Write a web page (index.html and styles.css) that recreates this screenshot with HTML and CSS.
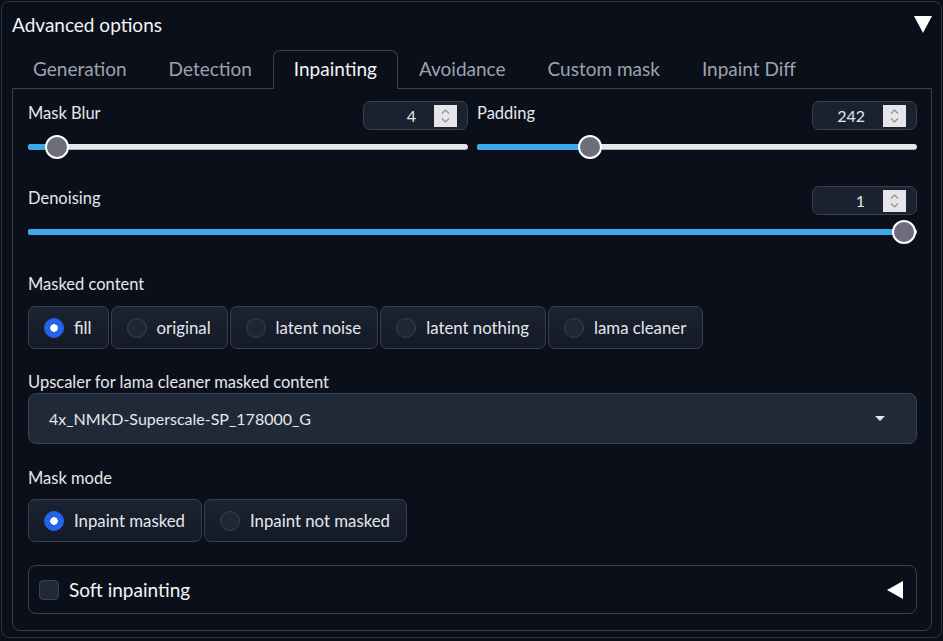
FILE: index.html
```html
<!DOCTYPE html>
<html>
<head>
<meta charset="utf-8">
<link rel="stylesheet" href="styles.css">
</head>
<body>
<div class="acc">
  <div class="acc-head">
    <span class="acc-title">Advanced options</span>
    <svg class="tri-down" width="18" height="17" viewBox="0 0 18 17"><polygon points="0,0 18,0 9,17" fill="#ffffff"/></svg>
  </div>
  <div class="tabs">
    <div class="tab">Generation</div>
    <div class="tab">Detection</div>
    <div class="tab tab-on">Inpainting</div>
    <div class="tab">Avoidance</div>
    <div class="tab">Custom mask</div>
    <div class="tab">Inpaint Diff</div>
  </div>
  <div class="panel">
    <div class="grid2">
      <div class="sl">
        <div class="sl-head">
          <span class="lbl">Mask Blur</span>
          <div class="num"><span class="num-val">4</span><svg class="spin" width="23" height="22" viewBox="0 0 23 22"><rect width="23" height="22" fill="#e6e6ea"/><polyline points="8,8.5 11.5,5 15,8.5" fill="none" stroke="#8d9097" stroke-width="1.2"/><polyline points="8,13.5 11.5,17 15,13.5" fill="none" stroke="#8d9097" stroke-width="1.2"/></svg></div>
        </div>
        <div class="range"><div class="track"><div class="fill" style="width:6.6%"></div></div><div class="thumb" style="left:6.6%"></div></div>
      </div>
      <div class="sl">
        <div class="sl-head">
          <span class="lbl">Padding</span>
          <div class="num"><span class="num-val">242</span><svg class="spin" width="23" height="22" viewBox="0 0 23 22"><rect width="23" height="22" fill="#e6e6ea"/><polyline points="8,8.5 11.5,5 15,8.5" fill="none" stroke="#8d9097" stroke-width="1.2"/><polyline points="8,13.5 11.5,17 15,13.5" fill="none" stroke="#8d9097" stroke-width="1.2"/></svg></div>
        </div>
        <div class="range"><div class="track"><div class="fill" style="width:25.7%"></div></div><div class="thumb" style="left:25.7%"></div></div>
      </div>
    </div>
    <div class="sl sl-denoise">
      <div class="sl-head">
        <span class="lbl">Denoising</span>
        <div class="num"><span class="num-val">1</span><svg class="spin" width="23" height="22" viewBox="0 0 23 22"><rect width="23" height="22" fill="#e6e6ea"/><polyline points="8,8.5 11.5,5 15,8.5" fill="none" stroke="#8d9097" stroke-width="1.2"/><polyline points="8,13.5 11.5,17 15,13.5" fill="none" stroke="#8d9097" stroke-width="1.2"/></svg></div>
      </div>
      <div class="range"><div class="track"><div class="fill" style="width:98.5%"></div></div><div class="thumb" style="left:98.5%"></div></div>
    </div>

    <div class="field f-masked">
      <div class="lbl-line">Masked content</div>
      <div class="radios">
        <div class="ritem"><span class="rdot on"></span><span>fill</span></div>
        <div class="ritem"><span class="rdot"></span><span>original</span></div>
        <div class="ritem"><span class="rdot"></span><span>latent noise</span></div>
        <div class="ritem"><span class="rdot"></span><span>latent nothing</span></div>
        <div class="ritem"><span class="rdot"></span><span>lama cleaner</span></div>
      </div>
    </div>

    <div class="field f-upscaler">
      <div class="lbl-line">Upscaler for lama cleaner masked content</div>
      <div class="dropdown">
        <span class="dd-val">4x_NMKD-Superscale-SP_178000_G</span>
        <svg class="dd-arrow" width="10" height="5" viewBox="0 0 10 5"><polygon points="0,0 10,0 5,5" fill="#e5e7eb"/></svg>
      </div>
    </div>

    <div class="field f-mode">
      <div class="lbl-line">Mask mode</div>
      <div class="radios">
        <div class="ritem"><span class="rdot on"></span><span>Inpaint masked</span></div>
        <div class="ritem"><span class="rdot"></span><span>Inpaint not masked</span></div>
      </div>
    </div>

    <div class="soft">
      <span class="cbox"></span>
      <span class="soft-title">Soft inpainting</span>
      <svg class="tri-left" width="16" height="18" viewBox="0 0 16 18"><polygon points="16,0 16,18 0,9" fill="#ffffff"/></svg>
    </div>
  </div>
</div>
</body>
</html>
```
FILE: styles.css
```css
* { box-sizing: border-box; }
html, body { margin: 0; padding: 0; background: #0b0f19; }
body {
  padding: 1px 0 0 1px;
  font-family: "Lato", "Liberation Sans", sans-serif;
  color: #e5e7eb;
}
.acc {
  width: 941px;
  border: 1px solid #2b3342;
  border-radius: 8px;
  padding: 0 9px 6px 10px;
  background: #0b0f19;
}
.acc-head {
  height: 48px;
  display: flex;
  align-items: center;
  justify-content: space-between;
}
.acc-title {
  font-size: 19px;
  color: #f3f4f6;
  margin-top: -3px;
}
.tri-down { display: block; margin-top: -4px; }
.tabs {
  display: flex;
  height: 38px;
  position: relative;
  z-index: 1;
}
.tab {
  height: 38px;
  padding: 0 20px 3px;
  display: flex;
  align-items: center;
  font-size: 19px;
  color: #9ca3af;
  border: 1px solid transparent;
  border-bottom: none;
}
.tab-on {
  color: #f3f4f6;
  border-color: #374151;
  border-radius: 7px 7px 0 0;
  background: #0b0f19;
  height: 39px;
  margin-bottom: -1px;
}
.panel {
  border: 1px solid #374151;
  border-radius: 0 0 8px 8px;
  padding: 12px 14px 16px 15px;
  display: flex;
  flex-direction: column;
}
.grid2 {
  display: grid;
  grid-template-columns: 1fr 1fr;
  column-gap: 9px;
}
.sl-head {
  display: flex;
  justify-content: space-between;
  align-items: flex-start;
  height: 29px;
}
.lbl {
  font-size: 16.5px;
  line-height: 24px;
  color: #e5e7eb;
}
.num {
  width: 105px;
  height: 29px;
  border: 1px solid #374151;
  border-radius: 7px;
  background: #1a2130;
  display: flex;
  align-items: center;
  justify-content: flex-end;
  padding: 0 10px 0 0;
}
.num-val {
  font-size: 16px;
  color: #e5e7eb;
  margin-right: 18px;
}
.spin { display: block; }
.range {
  position: relative;
  height: 24px;
  margin-top: 5px;
  display: flex;
  align-items: center;
}
.track {
  width: 100%;
  height: 6px;
  border-radius: 3px;
  background: #e5e7eb;
  overflow: hidden;
  box-shadow: inset 0 -1px 0 rgba(0,0,0,0.25);
}
.fill {
  height: 100%;
  background: #3aa9e8;
}
.thumb {
  position: absolute;
  top: 0;
  width: 24px;
  height: 24px;
  margin-left: -12px;
  border-radius: 50%;
  background: #6d6d7c;
  border: 2px solid #ffffff;
}
.sl-denoise { margin-top: 27px; }
.field { display: flex; flex-direction: column; }
.f-masked { margin-top: 29px; }
.f-upscaler { margin-top: 22px; }
.f-mode { margin-top: 23px; }
.lbl-line {
  font-size: 16.5px;
  line-height: 22px;
  color: #e5e7eb;
}
.radios {
  display: flex;
  gap: 2px;
  margin-top: 11px;
}
.f-mode .radios { margin-top: 10px; }
.ritem {
  height: 43px;
  display: flex;
  align-items: center;
  gap: 10px;
  padding: 0 16px 0 15px;
  border: 1px solid #374151;
  border-radius: 7px;
  background: linear-gradient(to bottom, #1b2231, #141a26);
  font-size: 16.8px;
  color: #e5e7eb;
}
.rdot {
  width: 20px;
  height: 20px;
  border-radius: 50%;
  background: #1f2735;
  border: 1px solid #374151;
  flex: none;
}
.rdot.on {
  background: #2563eb radial-gradient(circle, #ffffff 0 3.5px, transparent 4px);
  border-color: #2563eb;
}
.dropdown {
  height: 51px;
  border: 1px solid #374151;
  border-radius: 8px;
  background: #1f2937;
  display: flex;
  align-items: center;
  justify-content: space-between;
  padding: 0 31px 0 20px;
}
.dd-val { font-size: 16px; color: #e5e7eb; }
.dd-arrow { display: block; }
.soft {
  margin-top: 23px;
  height: 49px;
  border: 1px solid #374151;
  border-radius: 8px;
  display: flex;
  align-items: center;
  padding: 0 13px 0 10px;
}
.cbox {
  width: 20px;
  height: 20px;
  border-radius: 4px;
  background: #1f2937;
  border: 1px solid #374151;
  flex: none;
}
.soft-title {
  font-size: 19px;
  color: #f3f4f6;
  margin-left: 10px;
  flex: 1;
}
.tri-left { display: block; }
```
